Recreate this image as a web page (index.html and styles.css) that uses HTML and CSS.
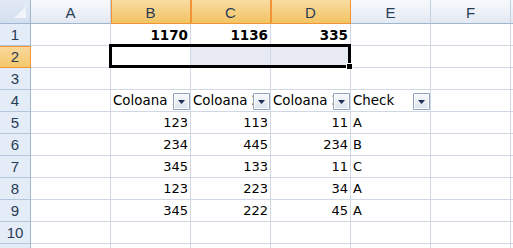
FILE: index.html
```
<!DOCTYPE html>
<html>
<head>
<meta charset="utf-8">
<link rel="stylesheet" href="styles.css">
</head>
<body>
<div class="sheet">
  <div class="corner"><span class="tri"></span></div>
  <div class="ch">A</div><div class="ch sel">B</div><div class="ch sel">C</div><div class="ch sel">D</div><div class="ch">E</div><div class="ch">F</div><div class="ch"></div>

  <div class="rh">1</div><div class="c"></div><div class="c num bold">1170</div><div class="c num bold">1136</div><div class="c num bold">335</div><div class="c"></div><div class="c"></div><div class="c"></div>

  <div class="rh rsel">2</div><div class="c"></div><div class="c"></div><div class="c fill"></div><div class="c fill"></div><div class="c"></div><div class="c"></div><div class="c"></div>

  <div class="rh">3</div><div class="c"></div><div class="c"></div><div class="c"></div><div class="c"></div><div class="c"></div><div class="c"></div><div class="c"></div>

  <div class="rh">4</div><div class="c"></div>
  <div class="c hd">Coloana 1<span class="dd"><svg width="7" height="4" viewBox="0 0 7 4"><polygon points="0,0 7,0 3.5,4" fill="#1b2f5a"/></svg></span></div>
  <div class="c hd">Coloana 2<span class="dd"><svg width="7" height="4" viewBox="0 0 7 4"><polygon points="0,0 7,0 3.5,4" fill="#1b2f5a"/></svg></span></div>
  <div class="c hd">Coloana 3<span class="dd"><svg width="7" height="4" viewBox="0 0 7 4"><polygon points="0,0 7,0 3.5,4" fill="#1b2f5a"/></svg></span></div>
  <div class="c hd">Check<span class="dd"><svg width="7" height="4" viewBox="0 0 7 4"><polygon points="0,0 7,0 3.5,4" fill="#1b2f5a"/></svg></span></div>
  <div class="c"></div><div class="c"></div>

  <div class="rh">5</div><div class="c"></div><div class="c num">123</div><div class="c num">113</div><div class="c num">11</div><div class="c">A</div><div class="c"></div><div class="c"></div>
  <div class="rh">6</div><div class="c"></div><div class="c num">234</div><div class="c num">445</div><div class="c num">234</div><div class="c">B</div><div class="c"></div><div class="c"></div>
  <div class="rh">7</div><div class="c"></div><div class="c num">345</div><div class="c num">133</div><div class="c num">11</div><div class="c">C</div><div class="c"></div><div class="c"></div>
  <div class="rh">8</div><div class="c"></div><div class="c num">123</div><div class="c num">223</div><div class="c num">34</div><div class="c">A</div><div class="c"></div><div class="c"></div>
  <div class="rh">9</div><div class="c"></div><div class="c num">345</div><div class="c num">222</div><div class="c num">45</div><div class="c">A</div><div class="c"></div><div class="c"></div>
  <div class="rh">10</div><div class="c"></div><div class="c"></div><div class="c"></div><div class="c"></div><div class="c"></div><div class="c"></div><div class="c"></div>
  <div class="rh"></div><div class="c"></div><div class="c"></div><div class="c"></div><div class="c"></div><div class="c"></div><div class="c"></div><div class="c"></div>

  <div class="selection"><span class="handle"></span></div>
</div>
</body>
</html>
```

FILE: styles.css
```
html, body {
  margin: 0;
  padding: 0;
  background: #ffffff;
  overflow: hidden;
}

.sheet {
  position: relative;
  display: grid;
  grid-template-columns: 31px repeat(7, 80px);
  grid-template-rows: 24px repeat(11, 22px);
  width: 513px;
  height: 248px;
  overflow: hidden;
  font-family: "DejaVu Sans", sans-serif;
  font-size: 13px;
  color: #000;
}

.corner {
  box-sizing: border-box;
  background: linear-gradient(#e2eaf5, #d3deee);
  border-right: 1px solid #9eb6ce;
  border-bottom: 1px solid #9eb6ce;
  display: flex;
  justify-content: flex-end;
  align-items: flex-end;
  padding: 0 4px 5px 0;
}

.tri {
  width: 12px;
  height: 12px;
  background: linear-gradient(135deg, #e4ecf6, #f6f9fd);
  clip-path: polygon(100% 0, 100% 100%, 0 100%);
}

.ch {
  box-sizing: border-box;
  background: linear-gradient(#f7f9fc, #e3e9f2);
  border-right: 1px solid #c2d0e2;
  border-bottom: 1px solid #9eb6ce;
  font-family: "Liberation Sans", sans-serif;
  font-size: 15px;
  color: #263c55;
  display: flex;
  justify-content: center;
  align-items: center;
  padding-top: 1px;
}

.ch.sel {
  background: linear-gradient(#f9dca3, #f2c463);
  border-right-color: #f29436;
  border-bottom-color: #f29436;
  box-shadow: inset 1px 0 0 #f29436;
}

.rh {
  box-sizing: border-box;
  background: #e4ecf7;
  border-right: 1px solid #9eb6ce;
  border-bottom: 1px solid #b4c6dc;
  font-family: "Liberation Sans", sans-serif;
  font-size: 15px;
  color: #263c55;
  display: flex;
  justify-content: center;
  align-items: flex-end;
  line-height: 16px;
  padding-bottom: 2px;
}

.rh.rsel {
  background: linear-gradient(#f9d99e, #f4c76a);
  border-right-color: #f29436;
  border-bottom-color: #f29436;
  box-shadow: inset 0 1px 0 #f29436;
}

.c {
  position: relative;
  box-sizing: border-box;
  border-right: 1px solid #d0d7e5;
  border-bottom: 1px solid #d0d7e5;
  display: flex;
  align-items: flex-end;
  line-height: 16px;
  padding: 0 2px 2px 2px;
  white-space: nowrap;
  overflow: hidden;
}

.c.hd {
  font-size: 13.4px;
}

.c.num {
  justify-content: flex-end;
}

.c.bold {
  font-weight: bold;
  font-size: 13.5px;
}

.c.fill {
  background: #e7eaf3;
}

.dd {
  position: absolute;
  right: 0;
  bottom: 1px;
  box-sizing: border-box;
  width: 17px;
  height: 17px;
  border: 1px solid #8ea2bf;
  border-radius: 1px;
  background: linear-gradient(#f6f8fb, #dfe4ed);
  box-shadow: inset 0 0 0 1px #fbfcfe;
  display: flex;
  justify-content: center;
  align-items: center;
  padding-top: 1px;
}

.dd svg {
  display: block;
}

.selection {
  position: absolute;
  left: 109px;
  top: 44px;
  width: 242px;
  height: 24px;
  box-sizing: border-box;
  border: 3px solid #000;
}

.handle {
  position: absolute;
  right: -5px;
  bottom: -5px;
  width: 5px;
  height: 5px;
  background: #000;
  border: 1px solid #fff;
}
```
